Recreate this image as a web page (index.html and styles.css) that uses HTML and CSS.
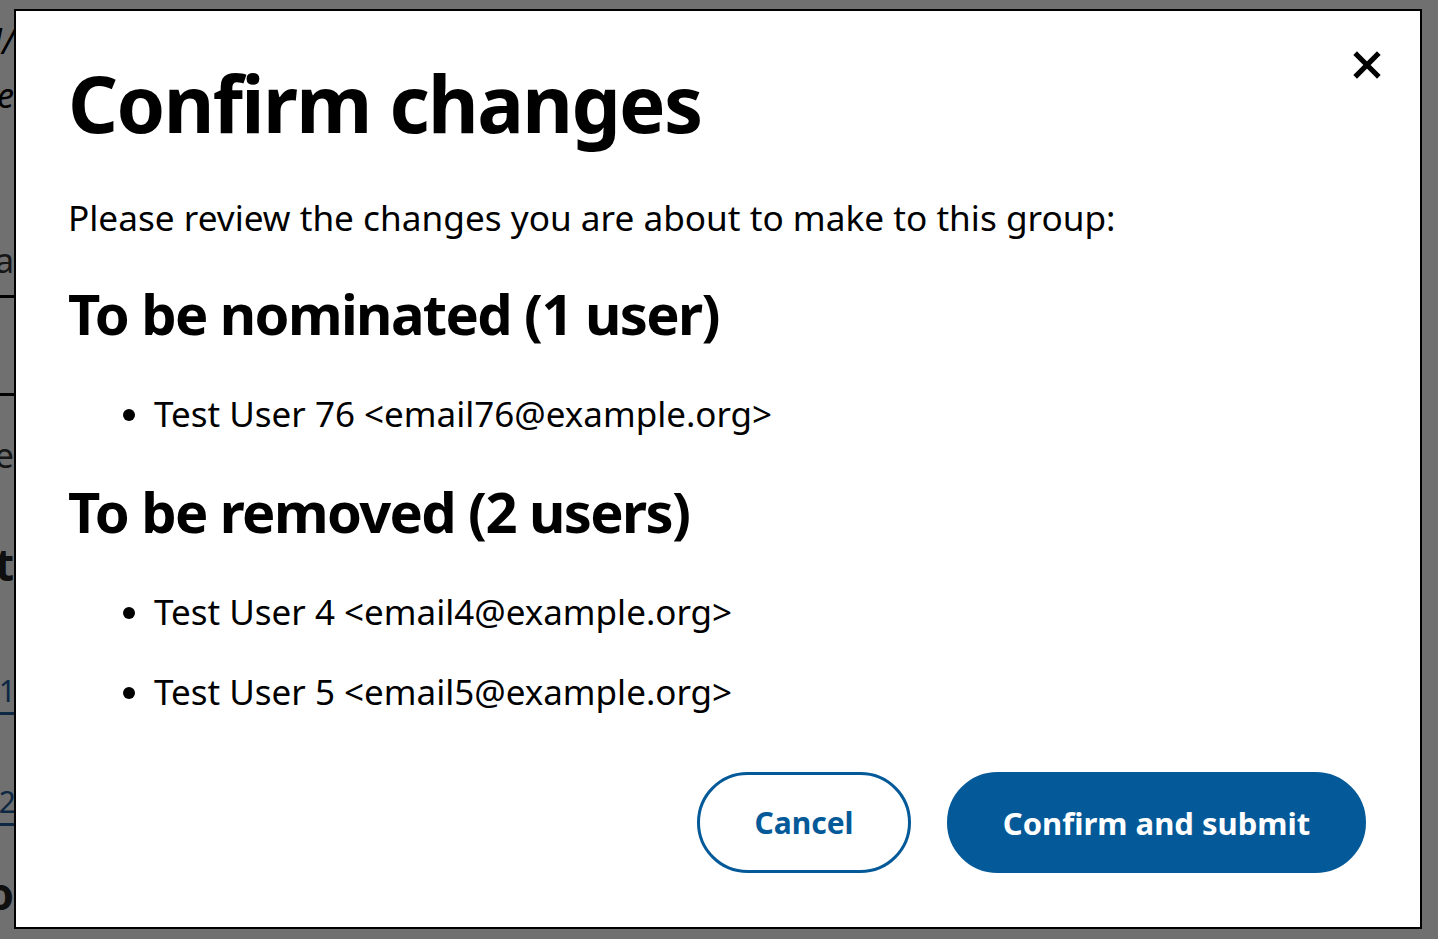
FILE: index.html
```html
<!DOCTYPE html>
<html lang="en">
<head>
<meta charset="utf-8">
<title>Confirm changes</title>
<link rel="stylesheet" href="styles.css">
</head>
<body>
<div class="page">
  <div class="bg-col">
    <div class="bg-row bg-it r1">Emal/</div>
    <div class="bg-row bg-it r2">Name</div>
    <div class="bg-row bg-txt r3">data</div>
    <div class="bg-rule r4"></div>
    <div class="bg-rule r5"></div>
    <div class="bg-row bg-txt r6">Name</div>
    <div class="bg-row bg-bold r7">List</div>
    <div class="bg-row bg-link r8">emal1</div>
    <div class="bg-line r9"></div>
    <div class="bg-row bg-link r10">emal2</div>
    <div class="bg-line r11"></div>
    <div class="bg-row bg-bold r12">Go</div>
  </div>
</div>
<div class="overlay"></div>
<div class="modal" role="dialog" aria-labelledby="modal-title">
  <button class="close" type="button" aria-label="Close">
    <svg viewBox="0 0 28 28" width="28" height="28" aria-hidden="true">
      <path d="M4 4 L24 24 M24 4 L4 24" stroke="#000" stroke-width="5.2" stroke-linecap="square" fill="none"/>
    </svg>
  </button>
  <h1 id="modal-title" class="title">Confirm changes</h1>
  <p class="lead">Please review the changes you are about to make to this group:</p>
  <h2 class="section">To be nominated (1 user)</h2>
  <ul class="users">
    <li>Test User 76 &lt;email76@example.org&gt;</li>
  </ul>
  <h2 class="section section-2">To be removed (2 users)</h2>
  <ul class="users">
    <li>Test User 4 &lt;email4@example.org&gt;</li>
    <li>Test User 5 &lt;email5@example.org&gt;</li>
  </ul>
  <div class="actions">
    <button class="btn btn-outline" type="button">Cancel</button>
    <button class="btn btn-primary" type="button">Confirm and submit</button>
  </div>
</div>
</body>
</html>
```

FILE: styles.css
```css
html, body {
  margin: 0;
  padding: 0;
  height: 100%;
  overflow: hidden;
}
body {
  font-family: "Noto Sans", "Open Sans", "DejaVu Sans", sans-serif;
  background: #ffffff;
  color: #000;
}
.page {
  height: 100%;
}
.bg-col {
  width: 14px;
  overflow: hidden;
  display: flex;
  flex-direction: column;
  align-items: flex-end;
}
.bg-row {
  white-space: nowrap;
  line-height: 1;
  font-size: 34px;
  color: #222;
}
.bg-it { font-style: italic; color: #000; }
.bg-txt { color: #333; }
.bg-bold { font-weight: 700; font-size: 44px; }
.bg-link { color: #1d5b9a; font-size: 30px; letter-spacing: -2px; }
.bg-rule { width: 14px; height: 3px; background: #000; flex: none; }
.bg-line { width: 14px; height: 3px; background: #1d5b9a; flex: none; }
.r1 { margin-top: 24px; }
.r2 { margin-top: 20px; }
.r3 { margin-top: 131px; }
.r4 { margin-top: 18px; }
.r5 { margin-top: 95px; }
.r6 { margin-top: 42px; }
.r7 { margin-top: 70px; }
.r8 { margin-top: 90px; }
.r9 { margin-top: 6px; }
.r10 { margin-top: 72px; }
.r11 { margin-top: 6px; }
.r12 { margin-top: 45px; }

.overlay {
  position: fixed;
  inset: 0;
  background: rgba(0, 0, 0, 0.56);
}
.modal {
  position: fixed;
  left: 14px;
  top: 9px;
  width: 1408px;
  height: 920px;
  box-sizing: border-box;
  border: 2px solid #000;
  background: #fff;
  padding: 0 54px 0 52px;
  display: flex;
  flex-direction: column;
}
.close {
  position: absolute;
  top: 40px;
  right: 39px;
  width: 28px;
  height: 28px;
  padding: 0;
  border: 0;
  background: transparent;
  display: flex;
}
.title {
  font-size: 78px;
  font-weight: 700;
  line-height: 1.2;
  margin: 46px 0 0;
  letter-spacing: -1.6px;
}
.lead {
  font-size: 35.2px;
  line-height: 1.4;
  margin: 42px 0 0;
}
.section {
  font-size: 56px;
  font-weight: 700;
  line-height: 1.2;
  margin: 38px 0 0;
  letter-spacing: -1.6px;
}
.section-2 {
  margin-top: 40px;
}
.users {
  margin: 42px 0 0;
  padding: 0 0 0 86px;
  font-size: 35px;
  line-height: 1.4;
}
.users li + li {
  margin-top: 31px;
}
.actions {
  margin-top: auto;
  margin-bottom: 54px;
  display: flex;
  justify-content: flex-end;
  gap: 36px;
}
.btn {
  font-family: inherit;
  font-size: 30px;
  font-weight: 700;
  height: 101px;
  border-radius: 51px;
  box-sizing: border-box;
  padding: 0;
  white-space: nowrap;
  cursor: pointer;
}
.btn-outline {
  background: #fff;
  color: #045a99;
  border: 3px solid #045a99;
  width: 214px;
}
.btn-primary {
  background: #045a99;
  color: #fff;
  border: 3px solid #045a99;
  width: 419px;
  font-size: 31px;
}
```
